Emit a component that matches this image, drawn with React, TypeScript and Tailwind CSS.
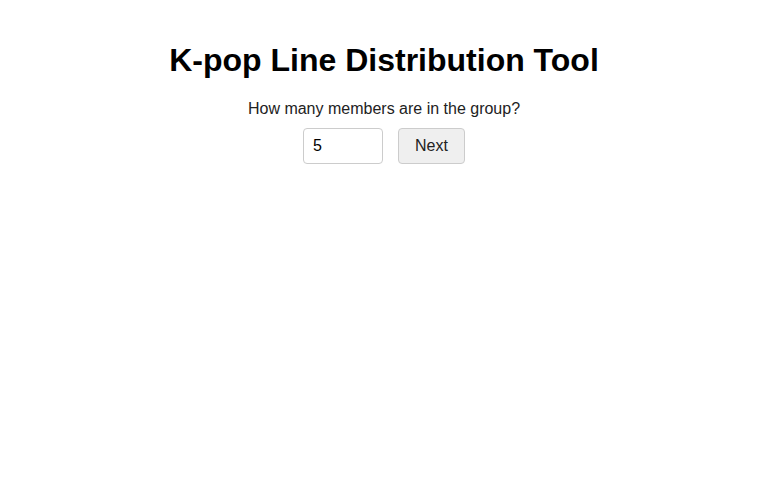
export default function App() {
  return (
    <div className="min-h-screen bg-white font-['Liberation_Sans',Arial,sans-serif] text-black">
      <div className="flex flex-col items-center pt-[42px]">
        <h1 className="text-[32px] font-bold leading-[37px]">K-pop Line Distribution Tool</h1>
        <p className="mt-[21px] text-[16px] leading-[18px] text-[#222]">How many members are in the group?</p>
        <div className="mt-[10px] flex items-center gap-[15px]">
          <input
            type="number"
            defaultValue={5}
            className="h-[36px] w-[80px] rounded-[4px] border border-[#ccc] px-[9px] text-[16px] text-black outline-none"
          />
          <button className="h-[36px] w-[67px] rounded-[4px] border border-[#ccc] bg-[#efefef] text-[16px] text-[#222]">
            Next
          </button>
        </div>
      </div>
    </div>
  );
}
